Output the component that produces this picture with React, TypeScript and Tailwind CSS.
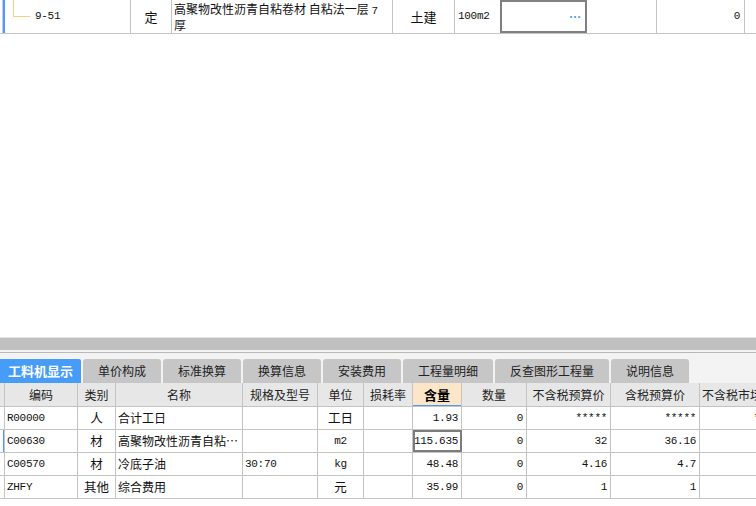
import React from 'react';

const cjk = { fontFamily: '"Noto Sans CJK SC", "Noto Sans", sans-serif' };
const mono = { fontFamily: '"Liberation Mono", "DejaVu Sans Mono", monospace', letterSpacing: '-0.3px' };

const cols = [5, 73, 38, 127, 75, 46, 49, 49, 65, 84, 89, 89];
const headers = ['', '编码', '类别', '名称', '规格及型号', '单位', '损耗率', '含量', '数量', '不含税预算价', '含税预算价', '不含税市场价'];

type Row = { code: string; kind: string; name: string; spec: string; unit: string; unitMono?: boolean; qty: string; a: string; b: string; c: string; mark?: boolean };

const rows: Row[] = [
  { code: 'R00000', kind: '人', name: '合计工日', spec: '', unit: '工日', qty: '1.93', a: '*****', b: '*****', c: '*****' },
  { code: 'C00630', kind: '材', name: '高聚物改性沥青自粘…', spec: '', unit: 'm2', unitMono: true, qty: '115.635', a: '32', b: '36.16', c: '', mark: true },
  { code: 'C00570', kind: '材', name: '冷底子油', spec: '30:70', unit: 'kg', unitMono: true, qty: '48.48', a: '4.16', b: '4.7', c: '' },
  { code: 'ZHFY', kind: '其他', name: '综合费用', spec: '', unit: '元', qty: '35.99', a: '1', b: '1', c: '' },
];

const tabs = [
  { label: '单价构成', w: 78 },
  { label: '标准换算', w: 78 },
  { label: '换算信息', w: 78 },
  { label: '安装费用', w: 78 },
  { label: '工程量明细', w: 90 },
  { label: '反查图形工程量', w: 114 },
  { label: '说明信息', w: 78 },
];

function TopRow() {
  return (
    <div className="flex h-[34px] shrink-0 border-b border-[#c4c4c4] text-[12px] text-[#111]" style={cjk}>
      <div className="relative w-[131px] shrink-0 border-r border-[#c4c4c4] flex items-center">
        <div className="absolute left-[2px] top-0 bottom-0 w-px bg-[#d0d0d0]" />
        <div className="absolute left-[3px] top-0 bottom-0 w-[2px] bg-[#4a9cf0]" />
        <div className="absolute left-[13px] top-0 h-[17px] w-px bg-[#ffcb80]" />
        <div className="absolute left-[13px] top-[16px] h-px w-[17px] bg-[#ffcb80]" />
        <span className="pl-[35px] text-[11px]" style={mono}>9-51</span>
      </div>
      <div className="w-[41px] shrink-0 border-r border-[#c4c4c4] flex items-center justify-center text-[13px]">定</div>
      <div className="w-[221px] shrink-0 border-r border-[#c4c4c4] pl-[2px] pr-[3px] leading-[14px] pt-[2px] overflow-hidden">
        高聚物改性沥青自粘卷材 自粘法一层 <span className="text-[11px]" style={mono}>7</span> 厚
      </div>
      <div className="w-[62px] shrink-0 border-r border-[#c4c4c4] flex items-center justify-center text-[13px]">土建</div>
      <div className="w-[45px] shrink-0 flex items-center pl-[3px] text-[11px]" style={mono}>100m2</div>
      <div className="w-[87px] shrink-0 border-2 border-[#808080] flex items-center justify-end pr-[4px] text-[#4a9cf0] text-[12px] font-bold leading-none">…</div>
      <div className="w-[70px] shrink-0 border-r border-[#c4c4c4]" />
      <div className="w-[88px] shrink-0 border-r border-[#c4c4c4] flex items-center justify-end pr-[4px] text-[11px]" style={mono}>0</div>
      <div className="flex-1" />
    </div>
  );
}

function Tabs() {
  return (
    <div className="flex h-[30px] shrink-0 items-end bg-[#f3f3f3] gap-[2px]" style={cjk}>
      <div className="w-[81px] h-[24px] shrink-0 bg-[#469cf7] rounded-tr-[2px] flex items-center justify-center text-white text-[13px] font-bold">工料机显示</div>
      {tabs.map((t) => (
        <div
          key={t.label}
          style={{ width: t.w }}
          className="h-[24px] shrink-0 bg-[#c6c6c6] rounded-t-[3px] flex items-center justify-center text-[12px] text-[#222]"
        >
          {t.label}
        </div>
      ))}
    </div>
  );
}

function HeaderRow() {
  return (
    <div className="flex h-[24px] shrink-0 border-b border-[#c4c4c4] bg-[#e7e7e7] text-[12px] text-[#222]" style={cjk}>
      {headers.map((h, i) => (
        <div
          key={i}
          style={{ width: cols[i] }}
          className={`relative shrink-0 border-r border-[#c4c4c4] flex items-center whitespace-nowrap overflow-hidden ${
            i === 7 ? 'bg-[#fde6c8] font-bold text-[13px] text-black' : ''
          } ${i === 11 ? 'justify-start pl-[2px]' : 'justify-center'}`}
        >
          {h}
          {i === 7 && <div className="absolute left-0 right-0 bottom-[-1px] h-[2px] bg-[#469cf7]" />}
        </div>
      ))}
    </div>
  );
}

function DataRow({ r }: { r: Row }) {
  const cell = 'shrink-0 border-r border-[#c4c4c4] flex items-center whitespace-nowrap overflow-hidden';
  return (
    <div className="flex h-[23px] shrink-0 border-b border-[#c4c4c4] text-[12px] text-[#111]" style={cjk}>
      <div style={{ width: cols[0] }} className={`${cell} relative`}>
        {r.mark && <div className="absolute left-[3px] top-0 bottom-0 w-[2px] bg-[#4a9cf0]" />}
      </div>
      <div style={{ width: cols[1], ...mono }} className={`${cell} pl-[2px] text-[11px]`}>{r.code}</div>
      <div style={{ width: cols[2] }} className={`${cell} justify-center text-[12.5px]`}>{r.kind}</div>
      <div style={{ width: cols[3] }} className={`${cell} pl-[2px] text-[12px]`}>{r.name}</div>
      <div style={{ width: cols[4], ...mono }} className={`${cell} pl-[2px] text-[11px]`}>{r.spec}</div>
      <div
        style={{ width: cols[5], ...(r.unitMono ? mono : {}) }}
        className={`${cell} justify-center ${r.unitMono ? 'text-[11px]' : 'text-[12.5px]'}`}
      >
        {r.unit}
      </div>
      <div style={{ width: cols[6] }} className={cell} />
      <div
        style={{ width: cols[7], ...mono }}
        className={`${cell} justify-end pr-[3px] text-[11px] ${r.mark ? 'outline-2 -outline-offset-2 outline-[#7c7c7c]' : ''}`}
      >
        {r.qty}
      </div>
      <div style={{ width: cols[8], ...mono }} className={`${cell} justify-end pr-[3px] text-[11px]`}>0</div>
      <div style={{ width: cols[9], ...mono }} className={`${cell} justify-end pr-[3px] text-[11px]`}>{r.a}</div>
      <div style={{ width: cols[10], ...mono }} className={`${cell} justify-end pr-[3px] text-[11px]`}>{r.b}</div>
      <div style={{ width: cols[11], ...mono }} className={`${cell} justify-end pr-[3px] text-[11px]`}>{r.c}</div>
    </div>
  );
}

export default function App() {
  return (
    <div className="w-[756px] h-[506px] bg-white flex flex-col overflow-hidden">
      <TopRow />
      <div className="flex-1 bg-white" />
      <div className="h-px shrink-0 bg-[#e2e2e2]" />
      <div className="h-[12px] shrink-0 bg-[#c0c0c0]" />
      <div className="h-[2px] shrink-0 bg-[#f3f3f3]" />
      <div className="h-px shrink-0 bg-[#b8b8b8]" />
      <Tabs />
      <div className="w-[800px]">
        <HeaderRow />
        {rows.map((r) => (
          <DataRow key={r.code} r={r} />
        ))}
      </div>
      <div className="h-[7px] shrink-0 bg-white" />
    </div>
  );
}
